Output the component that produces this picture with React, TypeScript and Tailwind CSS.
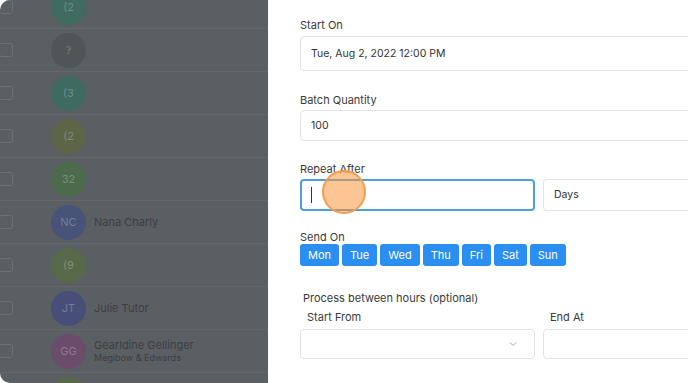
import { ChevronDown } from 'lucide-react';

interface Person {
  initials: string;
  bg: string;
  name?: string;
  company?: string;
}

const people: Person[] = [
  { initials: '(2', bg: 'bg-[#3f6b60]' },
  { initials: '?', bg: 'bg-[#4f5559]' },
  { initials: '(3', bg: 'bg-[#3d6b62]' },
  { initials: '(2', bg: 'bg-[#5c6548]' },
  { initials: '32', bg: 'bg-[#4c6b4c]' },
  { initials: 'NC', bg: 'bg-[#48537a]', name: 'Nana Charly' },
  { initials: '(9', bg: 'bg-[#58694a]' },
  { initials: 'JT', bg: 'bg-[#474f79]', name: 'Julie Tutor' },
  { initials: 'GG', bg: 'bg-[#6b4c6b]', name: 'Gearldine Gellinger', company: 'Megibow & Edwards' },
  { initials: '', bg: 'bg-[#58694a]' },
];

const days = ['Mon', 'Tue', 'Wed', 'Thu', 'Fri', 'Sat', 'Sun'];

function PersonRow({ p }: { p: Person }) {
  return (
    <div className="flex h-[43px] shrink-0 items-center border-b border-[#62676b]">
      <div className="ml-[-1px] h-[14px] w-[14px] shrink-0 rounded-[3px] border border-[#6c7175]" />
      <div
        className={`ml-[38px] flex h-[35px] w-[35px] shrink-0 items-center justify-center rounded-full text-[11px] text-white/25 ${p.bg}`}
      >
        {p.initials}
      </div>
      {p.name && (
        <div className="ml-[8px] flex flex-col">
          <span className="text-[11px] leading-[14px] text-[#3b4044]">{p.name}</span>
          {p.company && (
            <span className="text-[9px] leading-[12px] text-[#3b4044]">{p.company}</span>
          )}
        </div>
      )}
    </div>
  );
}

export default function App() {
  return (
    <div className="relative h-[383px] w-[688px] overflow-hidden bg-white" style={{ fontFamily: 'Inter, "Noto Sans", sans-serif' }}>
      <div className="flex h-full w-full overflow-hidden rounded-[10px]">
        {/* dimmed contact list behind the drawer */}
        <div className="flex w-[268px] shrink-0 flex-col overflow-hidden bg-[#5a5f63]">
          <div className="mt-[-14px] flex flex-col">
            {people.map((p, i) => (
              <PersonRow key={i} p={p} />
            ))}
          </div>
        </div>

        {/* schedule form */}
        <div className="min-w-0 flex-1 overflow-hidden bg-white pl-[32px] pt-[17px] text-[#333]">
          <div className="flex w-[478px] flex-col">
            <label className="text-[11px] leading-[16px] text-[#3a3a3a]">Start On</label>
            <div className="mt-[3px] flex h-[35px] items-center rounded-[4px] border border-[#e3e3e3] px-[10px] text-[10.5px]">
              Tue, Aug 2, 2022 12:00 PM
            </div>

            <label className="mt-[21px] text-[11px] leading-[16px] text-[#3a3a3a]">Batch Quantity</label>
            <div className="mt-[2px] flex h-[31px] items-center rounded-[4px] border border-[#e3e3e3] px-[10px] text-[10.5px]">
              100
            </div>

            <label className="mt-[20px] text-[11px] leading-[16px] text-[#3a3a3a]">Repeat After</label>
            <div className="mt-[2px] grid grid-cols-2 gap-[8px]">
              <div className="flex h-[32px] items-center rounded-[4px] border-2 border-[#4aa0dc] px-[9px]">
                <div className="h-[16px] w-px bg-[#333]" />
              </div>
              <div className="flex h-[32px] items-center rounded-[4px] border border-[#e3e3e3] px-[10px] text-[10.5px]">
                Days
              </div>
            </div>

            <label className="mt-[19px] text-[11px] leading-[14px] text-[#3a3a3a]">Send On</label>
            <div className="flex gap-[3px]">
              {days.map((d) => (
                <button
                  key={d}
                  className="h-[22px] rounded-[3px] bg-[#2a8ff0] px-[8px] text-[11px] leading-[22px] text-white"
                >
                  {d}
                </button>
              ))}
            </div>

            <label className="mt-[24px] pl-[3px] text-[11px] leading-[16px] text-[#3a3a3a]">
              Process between hours (optional)
            </label>
            <div className="mt-[3px] grid grid-cols-2 gap-[8px]">
              <div className="flex flex-col">
                <span className="pl-[7px] text-[11px] leading-[16px] text-[#3a3a3a]">Start From</span>
                <div className="mt-[4px] flex h-[30px] items-center justify-end rounded-[4px] border border-[#e3e3e3] pr-[15px]">
                  <ChevronDown size={12} strokeWidth={1.5} className="text-[#8a8a8a]" />
                </div>
              </div>
              <div className="flex flex-col">
                <span className="pl-[7px] text-[11px] leading-[16px] text-[#3a3a3a]">End At</span>
                <div className="mt-[4px] h-[30px] rounded-[4px] border border-[#e3e3e3]" />
              </div>
            </div>
          </div>
        </div>
      </div>

      {/* click indicator */}
      <div className="absolute left-[322px] top-[170px] h-[44px] w-[44px] rounded-full border-2 border-[#f59d4f] bg-[rgba(249,150,60,0.55)]" />
    </div>
  );
}
